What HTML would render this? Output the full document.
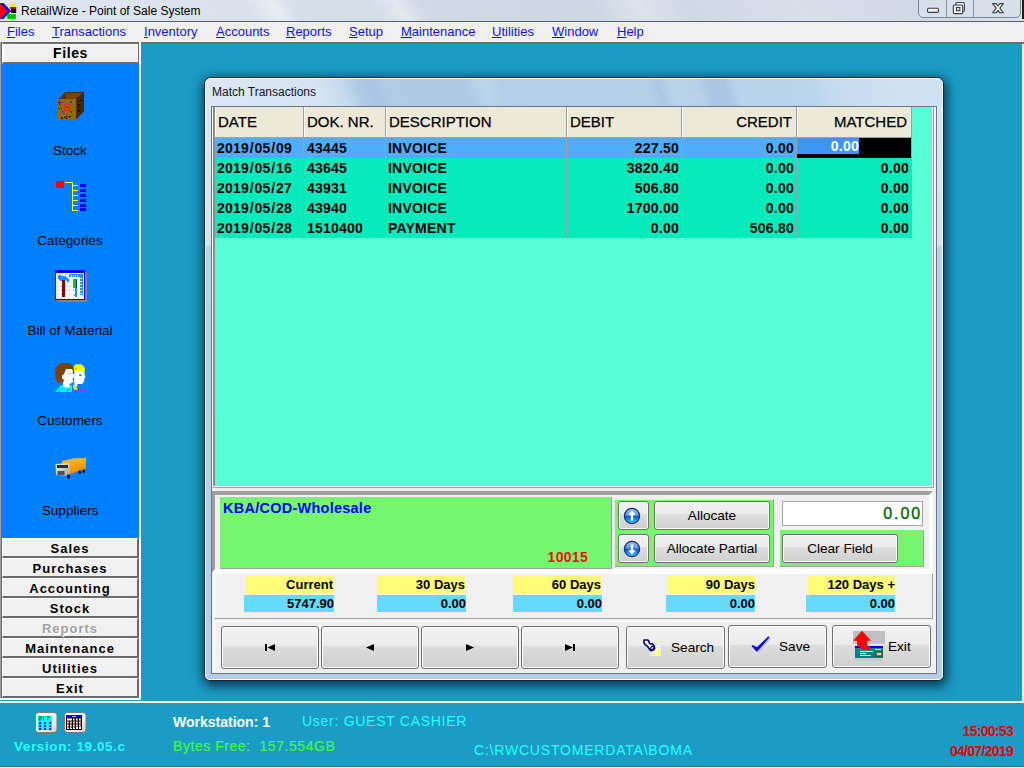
<!DOCTYPE html>
<html><head><meta charset="utf-8">
<style>
*{margin:0;padding:0;box-sizing:border-box}
html,body{width:1024px;height:768px;overflow:hidden}
body{position:relative;background:#1b9cc5;font-family:"Liberation Sans",sans-serif;color:#000}
.a{position:absolute}
.t{position:absolute;white-space:nowrap;line-height:1}
#title{left:0;top:0;width:1024px;height:21px;background:linear-gradient(60deg,#dfe7f0 0px,#d9e2ec 220px,#e6edf4 245px,#d5dfea 262px,#d3dde8 330px,#e2e9f1 352px,#d0dae6 372px,#ccd7e3 520px,#dbe3ec 560px,#cfd9e5 600px,#d6dfea 700px,#cfd9e5 820px,#dce4ed 900px,#d2dce7 1024px)}
#menu{left:0;top:22px;width:1024px;height:20px;background:#f0f0f0}
.mi{position:absolute;top:25px;font-size:13px;color:#1010f0;white-space:nowrap;line-height:14px}
.mi u{text-decoration:underline;text-decoration-thickness:1px;text-underline-offset:.5px}
/* sidebar */
#side{left:0;top:42px;width:141px;height:658px;background:#0080ff}
.sbtn{position:absolute;left:2px;width:137px;height:20px;background:#f0f0f0;border-top:1px solid #fff;border-left:1px solid #fff;border-bottom:2px solid #6b6b6b;border-right:2px solid #6b6b6b;font-weight:bold;font-size:13px;text-align:center;line-height:19px;letter-spacing:1px}
.slbl{position:absolute;left:0;width:140px;text-align:center;font-size:13.5px;line-height:1;white-space:nowrap}
/* status */
#status{left:0;top:703px;width:1024px;height:63px;background:#1b9cc5}
.btn{position:absolute;border:1px solid #707070;border-radius:3px;background:linear-gradient(#f2f2f2 0%,#ebebeb 45%,#dddddd 46%,#cfcfcf 100%);box-shadow:inset 0 0 0 1px #fcfcfc}
.btn span{position:absolute;left:0;right:0;text-align:center;font-size:13.6px;line-height:1;white-space:nowrap}
.hd{font-size:15px;-webkit-text-stroke:.25px #000}
.rw{font-size:14px;font-weight:bold;letter-spacing:.22px}
.ag{font-size:13px;font-weight:bold}
.sl{font-style:normal;margin:0 .7px}
</style></head><body>

<!-- title bar -->
<div id="title" class="a"></div>
<div class="a" style="left:0;top:21px;width:1024px;height:1px;background:#5b5f66"></div>
<div class="t" style="left:21px;top:5px;font-size:12px;color:#000">RetailWize - Point of Sale System</div>


<svg class="a" style="left:0;top:0" width="20" height="21" viewBox="0 0 20 21">
<polygon points="0,3 3.4,3 11.2,11 3.4,19 0,19" fill="#0000ff"/>
<polygon points="0,3.7 0.5,3.7 7.9,11 0.5,18.3 0,18.3" fill="#ff0000"/>
<rect x="10.2" y="3" width="6" height="4.5" fill="#ffee00"/>
<rect x="10.2" y="7" width="6" height="2" fill="#7a1a00"/>
<rect x="11.2" y="9" width="5" height="4" fill="#000"/>
<rect x="7" y="14" width="9" height="5" rx="1" fill="#00e000"/>
<path d="M9.5 14.5 q-1.2 2 0 4 M12 14.5 q-1.2 2 0 4 M14.5 14.5 q-1.2 2 0 4" stroke="#006000" stroke-width="0.9" fill="none"/>
</svg>
<svg class="a" style="left:917px;top:-1px" width="107" height="20" viewBox="917 -1 107 20">
<path d="M918.5 -1 V13 a4.5 4.5 0 0 0 4.5 4.5 H1016 a4.5 4.5 0 0 0 4.5 -4.5 V-1" fill="#d6dfea" stroke="#7d8796" stroke-width="1"/>
<line x1="946.5" y1="0" x2="946.5" y2="17" stroke="#8a93a0" stroke-width="1"/>
<line x1="973.5" y1="0" x2="973.5" y2="17" stroke="#8a93a0" stroke-width="1"/>
<rect x="927.5" y="8.2" width="11" height="4.2" rx="1.2" fill="#f4f2ec" stroke="#3a3f4e" stroke-width="1.1"/>
<rect x="955.8" y="2.5" width="8.6" height="9" rx="1.2" fill="#f4f2ec" stroke="#3a3f4e" stroke-width="1.1"/>
<rect x="953.3" y="5" width="9.4" height="8.6" rx="1.2" fill="#f4f2ec" stroke="#3a3f4e" stroke-width="1.1"/>
<rect x="956.5" y="7.5" width="3.3" height="3.2" fill="#cfe4f0" stroke="#3a3f4e" stroke-width="1.1"/>
<path d="M992.6 3.6 h3.6 l1.8 2.4 l1.8 -2.4 h3.6 l-3.6 4.6 l3.6 4.6 h-3.6 l-1.8 -2.4 l-1.8 2.4 h-3.6 l3.6 -4.6 z" fill="#f4f2ec" stroke="#3a3f4e" stroke-width="1.1" stroke-linejoin="round"/>
<rect x="1022" y="-1" width="2" height="21" fill="#1a1a1a"/>
</svg>

<!-- menu -->
<div id="menu" class="a"></div>
<div class="mi" style="left:7px"><u>F</u>iles</div>
<div class="mi" style="left:52px"><u>T</u>ransactions</div>
<div class="mi" style="left:144px"><u>I</u>nventory</div>
<div class="mi" style="left:216px"><u>A</u>ccounts</div>
<div class="mi" style="left:286px"><u>R</u>eports</div>
<div class="mi" style="left:349px"><u>S</u>etup</div>
<div class="mi" style="left:401px"><u>M</u>aintenance</div>
<div class="mi" style="left:492px"><u>U</u>tilities</div>
<div class="mi" style="left:552px"><u>W</u>indow</div>
<div class="mi" style="left:617px"><u>H</u>elp</div>
<div class="a" style="left:0;top:42px;width:1024px;height:2px;background:#6e6e6e"></div>

<!-- MDI area -->
<div class="a" style="left:141px;top:44px;width:883px;height:659px;background:#1b9cc5;border-right:2px solid #fff;border-bottom:2px solid #fff"></div>

<!-- sidebar -->
<div id="side" class="a"></div>
<div class="a" style="left:0;top:42px;width:1px;height:658px;background:#a0a0a0"></div><div class="a" style="left:1px;top:42px;width:1px;height:656px;background:#696969"></div>
<div class="a" style="left:139px;top:42px;width:2px;height:658px;background:#fff"></div>
<div class="a" style="left:0;top:698px;width:141px;height:2px;background:#fff"></div>


<div class="sbtn" style="top:42px;height:22px;border-top:2px solid #6e6e6e;border-right:1px solid #6e6e6e;box-shadow:inset -1px 0 0 #fff,inset 1px 1px 0 #fff;font-size:14px;line-height:18px;letter-spacing:.6px">Files</div>
<div class="sbtn" style="top:538px">Sales</div>
<div class="sbtn" style="top:558px">Purchases</div>
<div class="sbtn" style="top:578px">Accounting</div>
<div class="sbtn" style="top:598px">Stock</div>
<div class="sbtn" style="top:618px;color:#a0a0a0;text-shadow:1px 1px 0 #fff">Reports</div>
<div class="sbtn" style="top:638px">Maintenance</div>
<div class="sbtn" style="top:658px">Utilities</div>
<div class="sbtn" style="top:678px">Exit</div>
<div class="slbl" style="top:144px">Stock</div>
<div class="slbl" style="top:234px">Categories</div>
<div class="slbl" style="top:324px">Bill of Material</div>
<div class="slbl" style="top:414px">Customers</div>
<div class="slbl" style="top:504px">Suppliers</div>

<!-- stock box -->
<svg class="a" style="left:54px;top:88px" width="34" height="36" viewBox="54 88 34 36" shape-rendering="crispEdges">
<polygon points="58,99 65.5,92 84,92 75.5,99" fill="#7a4200"/>
<polygon points="58,99 65.5,92 65.5,99" fill="#5a3000"/>
<polygon points="65.5,92 84,92 84,93 66.5,93" fill="#4a2800"/>
<rect x="58" y="99" width="17.5" height="21" fill="#8e6a00"/>
<polygon points="75.5,99 84,92 84,111.5 75.5,120" fill="#4a2700"/>
<rect x="64.5" y="104.5" width="5" height="6" fill="none" stroke="#ff2020" stroke-width="1"/>
<path d="M63 103 l-1.2 -1.2 M70.6 103 l1.2 -1.2 M63 111.4 l-1.2 1.2 M70.6 111.4 l1.2 1.2" stroke="#1030ff" stroke-width="1.2"/>
<rect x="66.3" y="107" width="1.6" height="1" fill="#1030ff"/>
<path d="M59.4 106 v-4.3 M58.2 103 l1.2 -1.5 l1.2 1.5" stroke="#a00000" stroke-width="1.3" fill="none"/>
<rect x="59" y="108.2" width="1" height="1" fill="#000"/><rect x="61" y="108.2" width="1" height="1" fill="#000"/>
<path d="M61 118 h2 M61 116.5 v1.5 M64 116.5 v1.5 M65.5 116.5 l1 1.5 l1 -1.5 M69 118 v-1.5 h2" stroke="#000" stroke-width="1" fill="none"/>
<path d="M77.5 105.5 l2 -1.5 M79.5 101.5 l2 -1.5 M78 108 l2 -1.5 M78 111.5 l2 -1.5" stroke="#000" stroke-width="1"/>
</svg>
<!-- categories -->
<svg class="a" style="left:54px;top:178px" width="34" height="36" viewBox="54 178 34 36" shape-rendering="crispEdges">
<rect x="56" y="181" width="8" height="7" fill="#ff0000"/>
<path d="M65 182.5 H72.5 V210.5 M72 185.5 H78 M72 190.5 H78 M72 195.5 H78 M72 200.5 H78 M72 205.5 H78 M72 210.5 H78" stroke="#ffff00" stroke-width="1" fill="none"/>
<rect x="80" y="184" width="6" height="3" fill="#0000ff"/>
<rect x="80" y="189" width="6" height="3" fill="#0000ff"/>
<rect x="80" y="194" width="6" height="3" fill="#0000ff"/>
<rect x="80" y="199" width="6" height="3" fill="#0000ff"/>
<rect x="80" y="204" width="6" height="3" fill="#0000ff"/>
<rect x="80" y="208" width="6" height="3" fill="#0000ff"/>
</svg>
<!-- bill of material -->
<svg class="a" style="left:54px;top:268px" width="34" height="36" viewBox="54 268 34 36" shape-rendering="crispEdges">
<rect x="57" y="272" width="30" height="30" fill="#8c8070"/>
<rect x="55" y="270" width="30" height="30" fill="#0000ff"/>
<rect x="56" y="273" width="28" height="26" fill="#ffffff"/>
<g fill="#b0b0b0">
<rect x="57" y="274" width="1" height="1"/><rect x="61" y="274" width="1" height="1"/><rect x="65" y="274" width="1" height="1"/>
<rect x="57" y="282" width="1" height="1"/><rect x="57" y="286" width="1" height="1"/><rect x="57" y="290" width="1" height="1"/><rect x="57" y="294" width="1" height="1"/>
<rect x="61" y="286" width="1" height="1"/><rect x="61" y="290" width="1" height="1"/><rect x="61" y="294" width="1" height="1"/>
<rect x="69" y="286" width="1" height="1"/><rect x="69" y="290" width="1" height="1"/><rect x="69" y="294" width="1" height="1"/>
<rect x="73" y="290" width="1" height="1"/><rect x="73" y="294" width="1" height="1"/>
<rect x="57" y="298" width="1" height="1"/><rect x="61" y="298" width="1" height="1"/><rect x="65" y="298" width="1" height="1"/><rect x="69" y="298" width="1" height="1"/><rect x="73" y="298" width="1" height="1"/><rect x="77" y="298" width="1" height="1"/><rect x="81" y="298" width="1" height="1"/>
</g>
<polygon points="58,275 60,275 61,276 65,276 69,279 69,282 67,282 65,280 64,281 60,281 58,279" fill="#1e90ff"/>
<rect x="62" y="280" width="3" height="17" fill="#800000"/>
<rect x="65" y="286" width="1" height="1" fill="#1e90ff"/><rect x="65" y="290" width="1" height="1" fill="#1e90ff"/>
<polygon points="69,274 83,274 83,295 80,295 80,277 69,277" fill="#1e90ff"/>
<g fill="#ffff00"><rect x="71" y="275" width="1" height="2"/><rect x="73" y="275" width="1" height="2"/><rect x="75" y="275" width="1" height="2"/><rect x="77" y="275" width="1" height="2"/>
<rect x="80" y="278" width="2" height="1"/><rect x="80" y="281" width="2" height="1"/><rect x="80" y="284" width="2" height="1"/><rect x="80" y="287" width="2" height="1"/><rect x="80" y="290" width="2" height="1"/><rect x="80" y="293" width="2" height="1"/></g>
<rect x="73" y="279" width="4" height="9" rx="1.5" fill="#00d000"/>
<rect x="75.5" y="279" width="1.3" height="9" fill="#0030a0"/>
<rect x="75" y="288" width="1.5" height="8" fill="#1e90ff"/>
<polygon points="74,295 77.5,295 76,298" fill="#1e90ff"/>
</svg>
<!-- customers -->
<svg class="a" style="left:54px;top:360px" width="34" height="36" viewBox="54 360 34 36">
<path d="M55 391.5 L61 385 H72 V392 H55 Z" fill="#00f0ff"/>
<path d="M56.5 390 l2 -2 M58.5 391.5 l2 -2 M57 388 l2 -2 M62 386.5 l2.5 2.5 M67 391 l2 -2" stroke="#008878" stroke-width="0.9"/>
<path d="M61 363 H70 L72 365 L73.3 368 V373 L71 376 L68 376 L66 380 L63 383 L57 382 L55.3 377 V370 L57 366 Z" fill="#804000"/>
<path d="M66 369 H72 L73 371 L72.5 373 L74.5 375 L74 377 L73 378 L73.2 382 L71 383.5 L69.5 384 L69.8 387.5 L63 387.5 L63 383 L64 380 L62 378 L62 375.5 L64 374 Z" fill="#ffffff"/>
<rect x="69.2" y="373" width="1.2" height="1" fill="#1e90ff"/>
<path d="M72 379.5 h1.5" stroke="#1e90ff" stroke-width=".8"/>
<path d="M73.7 366 L76 364.2 H81 L84 366.5 L85 369 L84.5 371.2 H74 Z" fill="#ffff00"/>
<path d="M74.5 366 l1 1 m0.5 1 l1 1 M75 369 l1 -1" stroke="#a0a040" stroke-width=".7"/>
<path d="M74.5 371 H84.5 L84.5 374.5 L85.5 377.5 L84 378.5 L84.5 380 L83.8 382 L82 384 L77.5 384 L77 387 L74.5 386 L74 379 Z" fill="#ffffff"/>
<rect x="79.3" y="374.6" width="2" height="1.2" fill="#0000ff"/>
<path d="M73 384.5 L76 386 L77.5 389.5 L75 390.5 L73 388 Z" fill="#e8e800"/>
<rect x="74" y="390" width="2" height="1.8" fill="#ff00ff"/><rect x="79" y="389.5" width="2.2" height="2.2" fill="#ff00ff"/><rect x="83" y="390" width="2" height="1.8" fill="#ff00ff"/>
</svg>
<!-- suppliers truck -->
<svg class="a" style="left:54px;top:454px" width="34" height="28" viewBox="54 454 34 28">
<defs><linearGradient id="or" x1="0" y1="0" x2="0.3" y2="1"><stop offset="0" stop-color="#ffc030"/><stop offset="1" stop-color="#f08a00"/></linearGradient>
<linearGradient id="gr" x1="0" y1="0" x2="1" y2="1"><stop offset="0" stop-color="#f4f4f4"/><stop offset="1" stop-color="#a0a0a0"/></linearGradient></defs>
<polygon points="62,461 73,458.5 86,458 86,468.5 70,474 69,470 62,470" fill="url(#or)"/>
<polygon points="55.5,464 69,463 70,464.5 70,476 56,475" fill="url(#gr)"/>
<rect x="57" y="465" width="11" height="3" fill="#303030"/>
<rect x="57.5" y="471" width="7" height="4" fill="#505050"/>
<rect x="67" y="474.5" width="3" height="4" rx="1" fill="#1a1a1a"/>
<rect x="78.5" y="470.5" width="2.5" height="3.5" rx="1" fill="#1a1a1a"/>
<rect x="82.5" y="469.5" width="2.5" height="3.5" rx="1" fill="#1a1a1a"/>
</svg>



<!-- dialog -->
<div class="a" style="left:204px;top:77px;width:740px;height:604px;border:1px solid #1c2733;border-radius:7px 7px 6px 6px;box-shadow:1px 3px 12px 2px rgba(0,20,40,.75);background:#bad2ea"></div>
<div class="a" style="left:205px;top:78px;width:738px;height:602px;border:1px solid #fdfeff;border-radius:6px 6px 5px 5px;background:linear-gradient(180deg,#dae6f3 0px,#d5e2f0 166px,#bad1ea 168px,#b4cde7 100%)"></div>
<div class="a" style="left:206px;top:79px;width:736px;height:27px;border-radius:5px 5px 0 0;background:linear-gradient(70deg,#dbe7f4 0px,#d6e4f2 110px,#c4d9ee 135px,#aec9e4 150px,#a9c5e2 165px,#b0cbe6 175px,#aecae5 250px,#bcd5ec 268px,#b3cee8 285px,#b6d0ea 420px,#abc8e4 432px,#bad3eb 445px,#b8d2ea 468px,#a8c5e2 480px,#a9c6e3 495px,#b9d3ec 505px,#bad4ec 570px,#c6dbef 600px,#cfe1f2 650px,#d2e3f3 736px)"></div>
<div class="t" style="left:212px;top:86px;font-size:12px;color:#101820">Match Transactions</div>
<!-- client -->
<div class="a" style="left:211px;top:106px;width:726px;height:568px;border:1px solid #6d7783;background:#f0f0f0"></div>
<div class="a" style="left:212px;top:107px;width:722px;height:381px;background:#58ffd6;border-left:1px solid #fff;border-top:0;border-right:1px solid #a0a0a0;border-bottom:1px solid #a0a0a0;box-shadow:inset 2px 0 0 #8c8c8c"></div>
<div class="a" style="left:932px;top:107px;width:1px;height:380px;background:#fff"></div>
<div class="a" style="left:213px;top:486px;width:719px;height:1px;background:#fff"></div>
<div class="a" style="left:215px;top:107px;width:697px;height:31px;background:#ece9d8;border-bottom:1px solid #a0a0a0"></div>
<div class="a" style="left:303px;top:107px;width:1px;height:131px;background:#a0a0a0"></div>
<div class="a" style="left:215px;top:107px;width:1px;height:30px;background:#fff"></div>
<div class="t hd" style="left:218px;top:114px">DATE</div>
<div class="a" style="left:385px;top:107px;width:1px;height:131px;background:#a0a0a0"></div>
<div class="a" style="left:304px;top:107px;width:1px;height:30px;background:#fff"></div>
<div class="t hd" style="left:307px;top:114px">DOK. NR.</div>
<div class="a" style="left:566px;top:107px;width:1px;height:131px;background:#a0a0a0"></div>
<div class="a" style="left:386px;top:107px;width:1px;height:30px;background:#fff"></div>
<div class="t hd" style="left:389px;top:114px">DESCRIPTION</div>
<div class="a" style="left:681px;top:107px;width:1px;height:131px;background:#a0a0a0"></div>
<div class="a" style="left:567px;top:107px;width:1px;height:30px;background:#fff"></div>
<div class="t hd" style="left:570px;top:114px">DEBIT</div>
<div class="a" style="left:796px;top:107px;width:1px;height:131px;background:#a0a0a0"></div>
<div class="a" style="left:682px;top:107px;width:1px;height:30px;background:#fff"></div>
<div class="t hd" style="left:682px;width:110px;text-align:right;top:114px">CREDIT</div>
<div class="a" style="left:911px;top:107px;width:1px;height:131px;background:#a0a0a0"></div>
<div class="a" style="left:797px;top:107px;width:1px;height:30px;background:#fff"></div>
<div class="t hd" style="left:797px;width:110px;text-align:right;top:114px">MATCHED</div>
<div class="a" style="left:215px;top:138px;width:88px;height:20px;background:#4faefc"></div>
<div class="t rw" style="left:217px;top:141px">2019<i class="sl">/</i>05<i class="sl">/</i>09</div>
<div class="a" style="left:304px;top:138px;width:81px;height:20px;background:#4faefc"></div>
<div class="t rw" style="left:307px;top:141px">43445</div>
<div class="a" style="left:386px;top:138px;width:180px;height:20px;background:#4faefc"></div>
<div class="t rw" style="left:388px;top:141px">INVOICE</div>
<div class="a" style="left:567px;top:138px;width:114px;height:20px;background:#4faefc"></div>
<div class="t rw" style="left:567px;width:112px;text-align:right;top:141px">227.50</div>
<div class="a" style="left:682px;top:138px;width:114px;height:20px;background:#4faefc"></div>
<div class="t rw" style="left:682px;width:112px;text-align:right;top:141px">0.00</div>
<div class="a" style="left:797px;top:138px;width:114px;height:20px;background:#4faefc"></div>
<div class="a" style="left:797px;top:138px;width:114px;height:20px;background:#000"></div>
<div class="a" style="left:797px;top:138px;width:1px;height:16px;background:#e07010"></div>
<div class="a" style="left:798px;top:138px;width:61px;height:16px;background:#3d95f5"></div>
<div class="t rw" style="left:797px;width:62px;text-align:right;top:139px;color:#fff">0.00</div>
<div class="a" style="left:215px;top:158px;width:88px;height:20px;background:#05ebbb"></div>
<div class="t rw" style="left:217px;top:161px">2019<i class="sl">/</i>05<i class="sl">/</i>16</div>
<div class="a" style="left:304px;top:158px;width:81px;height:20px;background:#05ebbb"></div>
<div class="t rw" style="left:307px;top:161px">43645</div>
<div class="a" style="left:386px;top:158px;width:180px;height:20px;background:#05ebbb"></div>
<div class="t rw" style="left:388px;top:161px">INVOICE</div>
<div class="a" style="left:567px;top:158px;width:114px;height:20px;background:#05ebbb"></div>
<div class="t rw" style="left:567px;width:112px;text-align:right;top:161px">3820.40</div>
<div class="a" style="left:682px;top:158px;width:114px;height:20px;background:#05ebbb"></div>
<div class="t rw" style="left:682px;width:112px;text-align:right;top:161px">0.00</div>
<div class="a" style="left:797px;top:158px;width:114px;height:20px;background:#05ebbb"></div>
<div class="t rw" style="left:797px;width:112px;text-align:right;top:161px">0.00</div>
<div class="a" style="left:215px;top:178px;width:88px;height:20px;background:#05ebbb"></div>
<div class="t rw" style="left:217px;top:181px">2019<i class="sl">/</i>05<i class="sl">/</i>27</div>
<div class="a" style="left:304px;top:178px;width:81px;height:20px;background:#05ebbb"></div>
<div class="t rw" style="left:307px;top:181px">43931</div>
<div class="a" style="left:386px;top:178px;width:180px;height:20px;background:#05ebbb"></div>
<div class="t rw" style="left:388px;top:181px">INVOICE</div>
<div class="a" style="left:567px;top:178px;width:114px;height:20px;background:#05ebbb"></div>
<div class="t rw" style="left:567px;width:112px;text-align:right;top:181px">506.80</div>
<div class="a" style="left:682px;top:178px;width:114px;height:20px;background:#05ebbb"></div>
<div class="t rw" style="left:682px;width:112px;text-align:right;top:181px">0.00</div>
<div class="a" style="left:797px;top:178px;width:114px;height:20px;background:#05ebbb"></div>
<div class="t rw" style="left:797px;width:112px;text-align:right;top:181px">0.00</div>
<div class="a" style="left:215px;top:198px;width:88px;height:20px;background:#05ebbb"></div>
<div class="t rw" style="left:217px;top:201px">2019<i class="sl">/</i>05<i class="sl">/</i>28</div>
<div class="a" style="left:304px;top:198px;width:81px;height:20px;background:#05ebbb"></div>
<div class="t rw" style="left:307px;top:201px">43940</div>
<div class="a" style="left:386px;top:198px;width:180px;height:20px;background:#05ebbb"></div>
<div class="t rw" style="left:388px;top:201px">INVOICE</div>
<div class="a" style="left:567px;top:198px;width:114px;height:20px;background:#05ebbb"></div>
<div class="t rw" style="left:567px;width:112px;text-align:right;top:201px">1700.00</div>
<div class="a" style="left:682px;top:198px;width:114px;height:20px;background:#05ebbb"></div>
<div class="t rw" style="left:682px;width:112px;text-align:right;top:201px">0.00</div>
<div class="a" style="left:797px;top:198px;width:114px;height:20px;background:#05ebbb"></div>
<div class="t rw" style="left:797px;width:112px;text-align:right;top:201px">0.00</div>
<div class="a" style="left:215px;top:218px;width:88px;height:20px;background:#05ebbb"></div>
<div class="t rw" style="left:217px;top:221px">2019<i class="sl">/</i>05<i class="sl">/</i>28</div>
<div class="a" style="left:304px;top:218px;width:81px;height:20px;background:#05ebbb"></div>
<div class="t rw" style="left:307px;top:221px">1510400</div>
<div class="a" style="left:386px;top:218px;width:180px;height:20px;background:#05ebbb"></div>
<div class="t rw" style="left:388px;top:221px">PAYMENT</div>
<div class="a" style="left:567px;top:218px;width:114px;height:20px;background:#05ebbb"></div>
<div class="t rw" style="left:567px;width:112px;text-align:right;top:221px">0.00</div>
<div class="a" style="left:682px;top:218px;width:114px;height:20px;background:#05ebbb"></div>
<div class="t rw" style="left:682px;width:112px;text-align:right;top:221px">506.80</div>
<div class="a" style="left:797px;top:218px;width:114px;height:20px;background:#05ebbb"></div>
<div class="t rw" style="left:797px;width:112px;text-align:right;top:221px">0.00</div>
<div class="a" style="left:212px;top:491px;width:721px;height:82px;background:#f0f0f0;border-top:4px solid #a0a0a0;border-left:3px solid #a0a0a0;border-right:4px solid #fff;border-bottom:4px solid #fff"></div>
<div class="a" style="left:220px;top:497px;width:392px;height:72px;background:#76f56e;border-right:1px solid #a0a0a0;border-bottom:1px solid #a0a0a0"></div>
<div class="t" style="left:223px;top:501px;font-size:14.5px;font-weight:bold;letter-spacing:.25px;color:#0000f8">KBA/COD-Wholesale</div>
<div class="t" style="left:500px;top:550px;width:88px;text-align:right;font-size:14px;font-weight:bold;letter-spacing:.3px;color:#f01010">10015</div>
<div class="a" style="left:614px;top:499px;width:160px;height:68px;background:#76f56e;border-left:1px solid #e8e8e8;border-top:1px solid #e8e8e8;border-right:1px solid #a0a0a0;border-bottom:1px solid #a0a0a0"></div>
<div class="btn" style="left:618px;top:501px;width:31px;height:29px"><svg class="a" style="left:4px;top:5px" width="18" height="18" viewBox="0 0 18 18"><defs><linearGradient id="cb5" x1="0" y1="0" x2="0" y2="1"><stop offset="0" stop-color="#9cc8f4"/><stop offset=".48" stop-color="#4a8ee0"/><stop offset=".52" stop-color="#0a58c8"/><stop offset="1" stop-color="#38d0ff"/></linearGradient></defs><circle cx="9" cy="9" r="7.6" fill="url(#cb5)" stroke="#14287a" stroke-width="1.2"/><path d="M9 3.6 L13 7.8 H10.2 V13.5 H7.8 V7.8 H5 Z" fill="#fff"/></svg></div>
<div class="btn" style="left:618px;top:534px;width:31px;height:29px"><svg class="a" style="left:4px;top:5px" width="18" height="18" viewBox="0 0 18 18"><defs><linearGradient id="cb5" x1="0" y1="0" x2="0" y2="1"><stop offset="0" stop-color="#9cc8f4"/><stop offset=".48" stop-color="#4a8ee0"/><stop offset=".52" stop-color="#0a58c8"/><stop offset="1" stop-color="#38d0ff"/></linearGradient></defs><circle cx="9" cy="9" r="7.6" fill="url(#cb5)" stroke="#14287a" stroke-width="1.2"/><path d="M9 14.4 L13 10.2 H10.2 V4.5 H7.8 V10.2 H5 Z" fill="#fff"/></svg></div>
<div class="btn" style="left:654px;top:501px;width:116px;height:29px"><span style="top:7px">Allocate</span></div>
<div class="btn" style="left:654px;top:534px;width:116px;height:29px"><span style="top:7px">Allocate Partial</span></div>
<div class="a" style="left:782px;top:501px;width:141px;height:25px;background:#fff;border:1px solid #a9a9a9;border-right-color:#a0a0a0"></div>
<div class="t" style="left:782px;top:506px;width:140px;text-align:right;font-size:16px;letter-spacing:1.9px;color:#006400;-webkit-text-stroke:.35px #006400">0.00</div>
<div class="a" style="left:780px;top:530px;width:144px;height:37px;background:#76f56e;border-right:1px solid #a0a0a0;border-bottom:1px solid #a0a0a0"></div>
<div class="btn" style="left:782px;top:534px;width:116px;height:29px"><span style="top:7px">Clear Field</span></div>
<div class="a" style="left:214px;top:573px;width:719px;height:46px;background:#f0f0f0;border-top:1px solid #fff;border-left:1px solid #fff;border-right:1px solid #a0a0a0;border-bottom:1px solid #a0a0a0"></div>
<div class="a" style="left:245px;top:576px;width:88px;height:17px;background:#fffa78"></div>
<div class="a" style="left:244px;top:595px;width:90px;height:17px;background:#66d9fe"></div>
<div class="t ag" style="left:205px;width:128px;text-align:right;top:578px">Current</div>
<div class="t ag" style="left:204px;width:130px;text-align:right;top:597px">5747.90</div>
<div class="a" style="left:377px;top:576px;width:88px;height:17px;background:#fffa78"></div>
<div class="a" style="left:377px;top:595px;width:89px;height:17px;background:#66d9fe"></div>
<div class="t ag" style="left:337px;width:128px;text-align:right;top:578px">30 Days</div>
<div class="t ag" style="left:337px;width:129px;text-align:right;top:597px">0.00</div>
<div class="a" style="left:513px;top:576px;width:88px;height:17px;background:#fffa78"></div>
<div class="a" style="left:513px;top:595px;width:89px;height:17px;background:#66d9fe"></div>
<div class="t ag" style="left:473px;width:128px;text-align:right;top:578px">60 Days</div>
<div class="t ag" style="left:473px;width:129px;text-align:right;top:597px">0.00</div>
<div class="a" style="left:668px;top:576px;width:87px;height:17px;background:#fffa78"></div>
<div class="a" style="left:666px;top:595px;width:89px;height:17px;background:#66d9fe"></div>
<div class="t ag" style="left:628px;width:127px;text-align:right;top:578px">90 Days</div>
<div class="t ag" style="left:626px;width:129px;text-align:right;top:597px">0.00</div>
<div class="a" style="left:808px;top:576px;width:87px;height:17px;background:#fffa78"></div>
<div class="a" style="left:806px;top:595px;width:89px;height:17px;background:#66d9fe"></div>
<div class="t ag" style="left:768px;width:127px;text-align:right;top:578px">120 Days +</div>
<div class="t ag" style="left:766px;width:129px;text-align:right;top:597px">0.00</div>
<div class="a" style="left:214px;top:621px;width:722px;height:52px;background:#f0f0f0;border-top:1px solid #fff;border-left:1px solid #fff"></div>
<div class="btn" style="left:221px;top:626px;width:98px;height:43px"><svg class="a" style="left:40px;top:14px" width="16" height="14" viewBox="0 0 16 14"><rect x="3" y="3" width="2" height="7" fill="#000"/><polygon points="5.5,6.5 13,3 13,10" fill="#000"/></svg></div>
<div class="btn" style="left:321px;top:626px;width:98px;height:43px"><svg class="a" style="left:40px;top:14px" width="16" height="14" viewBox="0 0 16 14"><polygon points="4,6.5 12,3 12,10" fill="#000"/></svg></div>
<div class="btn" style="left:421px;top:626px;width:98px;height:43px"><svg class="a" style="left:40px;top:14px" width="16" height="14" viewBox="0 0 16 14"><polygon points="4,3 4,10 12,6.5" fill="#000"/></svg></div>
<div class="btn" style="left:521px;top:626px;width:98px;height:43px"><svg class="a" style="left:40px;top:14px" width="16" height="14" viewBox="0 0 16 14"><polygon points="3,3 3,10 11,6.5" fill="#000"/><rect x="11" y="3" width="2" height="7" fill="#000"/></svg></div>
<div class="btn" style="left:626px;top:626px;width:99px;height:43px"><span style="left:44px;right:auto;top:14px">Search</span><svg class="a" style="left:15px;top:11px" width="20" height="20" viewBox="0 0 20 20">
<rect x="8.5" y="8" width="10" height="10" fill="#fbfbff"/>
<g fill="#f0f000"><rect x="14.3" y="9" width="1.6" height="1"/><rect x="17" y="9" width="1" height="1"/><rect x="12.5" y="10.5" width="1" height="1.2"/><rect x="16" y="12" width="1" height="1"/>
<rect x="8.8" y="14.4" width="1.2" height="1.3"/><rect x="14.2" y="14" width="1" height="1.6"/><rect x="16" y="14" width="1" height="1"/><rect x="10.5" y="16" width="2" height="1"/><rect x="16" y="16" width="1" height="1"/><rect x="9" y="17" width="1" height="1"/><rect x="11.5" y="12.5" width="1" height="1"/><rect x="10" y="13.5" width="1" height="1"/></g>
<polygon points="2,2 5.8,2 7,3.6 7.4,5.5 10.5,6.1 12.4,8.6 12.7,10.5 11.4,12 8.9,12.7 7.4,11.1 5.5,8.3 2.7,6.1 2,4.9" fill="#f4f4f4" stroke="#000080" stroke-width="1.6" stroke-linejoin="round"/>
<path d="M3.5 3.6 L9.5 9.2" stroke="#fff" stroke-width="1"/>
<ellipse cx="10.3" cy="10" rx="1.4" ry="1.9" transform="rotate(40 10.3 10)" fill="#e8e8e8" stroke="#000080" stroke-width="1.2"/>
</svg></div>
<div class="btn" style="left:728px;top:625px;width:99px;height:43px"><span style="left:50px;right:auto;top:14px">Save</span><svg class="a" style="left:22px;top:10px" width="20" height="18" viewBox="0 0 20 18"><path d="M2.8 10.6 L6.3 14.3 L18.3 1.2" fill="none" stroke="#c0c0ff" stroke-width="2" transform="translate(1,0.6)"/><path d="M1.5 10 L5.8 14.6 L17.5 1.3 L6.2 12.2 Z" fill="#0000ff" stroke="#0000ff" stroke-width="1.6" stroke-linejoin="round"/></svg></div>
<div class="btn" style="left:832px;top:625px;width:99px;height:43px"><span style="left:55px;right:auto;top:14px">Exit</span><svg class="a" style="left:20px;top:4px" width="34" height="34" viewBox="0 0 34 34">
<rect x="0" y="1" width="32" height="12.7" fill="#c0c0c0"/>
<rect x="2" y="28" width="28" height="2.8" fill="#c8c8c8"/>
<rect x="2" y="16" width="28" height="2.2" fill="#0000ff"/>
<rect x="2" y="18.2" width="28" height="9.8" fill="#008080"/>
<g fill="#e0e8e8"><rect x="7" y="20.9" width="13" height="1"/><rect x="7" y="23" width="6" height="1"/><rect x="7" y="24.9" width="11" height="1"/><rect x="22" y="19.1" width="6" height="1"/></g>
<rect x="23" y="22" width="6" height="4" fill="#e0c8e0" stroke="#006000" stroke-width="1.2"/>
<polygon points="9,0.8 18.1,10.7 14.1,10.7 14.1,14.9 17.6,18.2 17.6,18.9 9.2,18.9 4,14.9 4,10.7 0,10.7" fill="#ff0000"/>
</svg></div>

<div class="a" style="left:0;top:701px;width:1024px;height:2px;background:#fff"></div>
<!-- status bar -->
<div id="status" class="a"></div>
<div class="t" style="left:173px;top:715px;font-size:14px;font-weight:bold;color:#fff">Workstation: 1</div>
<div class="t" style="left:302px;top:714px;font-size:14px;letter-spacing:.72px;color:#22ffff">User: GUEST CASHIER</div>
<div class="t" style="left:173px;top:739px;font-size:14px;letter-spacing:.55px;color:#40f840;-webkit-text-stroke:.2px #40f840">Bytes Free:&nbsp; 157.554GB</div>
<div class="t" style="left:474px;top:743px;font-size:14px;letter-spacing:.8px;color:#22ffff">C:\RWCUSTOMERDATA\BOMA</div>
<div class="t" style="left:14px;top:740px;font-size:13.5px;font-weight:bold;letter-spacing:.6px;color:#22ffff">Version: 19.05.c</div>
<div class="t" style="left:900px;width:113px;text-align:right;top:724px;font-size:14px;font-weight:bold;letter-spacing:-.7px;color:#e80000">15:00:53</div>
<div class="t" style="left:900px;width:113px;text-align:right;top:744px;font-size:14px;font-weight:bold;letter-spacing:-.7px;color:#e80000">04/07/2019</div>
<svg class="a" style="left:34px;top:711px" width="56" height="24" viewBox="34 711 56 24">
<defs><linearGradient id="sb" x1="0" y1="0" x2="1" y2="1"><stop offset="0" stop-color="#ffffff"/><stop offset=".6" stop-color="#f2f2f2"/><stop offset="1" stop-color="#d0d0d0"/></linearGradient></defs>
<rect x="35.5" y="712.5" width="21.5" height="20" rx="3" fill="url(#sb)" stroke="#7a7a7a" stroke-width="1"/>
<rect x="38" y="716" width="14" height="14" fill="#00ffff"/>
<path d="M39 716.6 h2.5 v1.5 h-2.5 v1.8 h2.5 M43.5 716.4 v3.6 M46 716.6 h3 l-2 3.4" stroke="#008000" stroke-width="1" fill="none"/>
<g fill="#0000ff"><rect x="39" y="722" width="2" height="2"/><rect x="44" y="722" width="2" height="2"/><rect x="49" y="722" width="2" height="2"/>
<rect x="39" y="725" width="2" height="2"/><rect x="44" y="725" width="2" height="2"/><rect x="49" y="725" width="2" height="2"/>
<rect x="39" y="728" width="2" height="2"/><rect x="44" y="728" width="2" height="2"/><rect x="49" y="728" width="2" height="2"/></g>
<rect x="64.5" y="712.5" width="21.5" height="20" rx="3" fill="url(#sb)" stroke="#7a7a7a" stroke-width="1"/>
<rect x="66" y="715" width="16" height="15" fill="#000"/>
<rect x="66" y="715" width="16" height="2.5" fill="#0000ff"/>
<rect x="72" y="716" width="4" height="1" fill="#c0c0ff"/>
<g fill="#fff">
<rect x="67" y="718.5" width="5" height="2"/><rect x="73" y="718.5" width="2" height="2"/><rect x="76" y="718.5" width="2" height="2"/><rect x="79" y="718.5" width="2" height="2"/>
<rect x="67" y="721.5" width="2" height="2"/><rect x="70" y="721.5" width="2" height="2"/><rect x="73" y="721.5" width="2" height="2"/><rect x="76" y="721.5" width="2" height="2"/><rect x="79" y="721.5" width="2" height="2"/>
<rect x="67" y="724.5" width="2" height="2"/><rect x="70" y="724.5" width="2" height="2"/><rect x="73" y="724.5" width="2" height="2"/><rect x="76" y="724.5" width="2" height="2"/><rect x="79" y="724.5" width="2" height="2"/>
<rect x="67" y="727" width="2" height="2"/><rect x="70" y="727" width="2" height="2"/><rect x="73" y="727" width="2" height="2"/><rect x="76" y="727" width="2" height="2"/><rect x="79" y="727" width="2" height="2"/></g>
<g fill="#ff0000">
<rect x="74" y="718.5" width="1" height="1"/><rect x="77" y="718.5" width="1" height="1"/><rect x="80" y="718.5" width="1" height="1"/>
<rect x="68" y="721.5" width="1" height="1"/><rect x="71" y="721.5" width="1" height="1"/><rect x="74" y="721.5" width="1" height="1"/><rect x="77" y="721.5" width="1" height="1"/><rect x="80" y="721.5" width="1" height="1"/>
<rect x="68" y="724.5" width="1" height="1"/><rect x="71" y="724.5" width="1" height="1"/><rect x="74" y="724.5" width="1" height="1"/><rect x="77" y="724.5" width="1" height="1"/><rect x="80" y="724.5" width="1" height="1"/>
<rect x="68" y="727" width="1" height="1"/><rect x="71" y="727" width="1" height="1"/><rect x="74" y="727" width="1" height="1"/></g>
</svg>
<div class="a" style="left:0;top:766px;width:1024px;height:2px;background:#e8e8e8;border-top:1px solid #4a6a78"></div>

</body></html>
